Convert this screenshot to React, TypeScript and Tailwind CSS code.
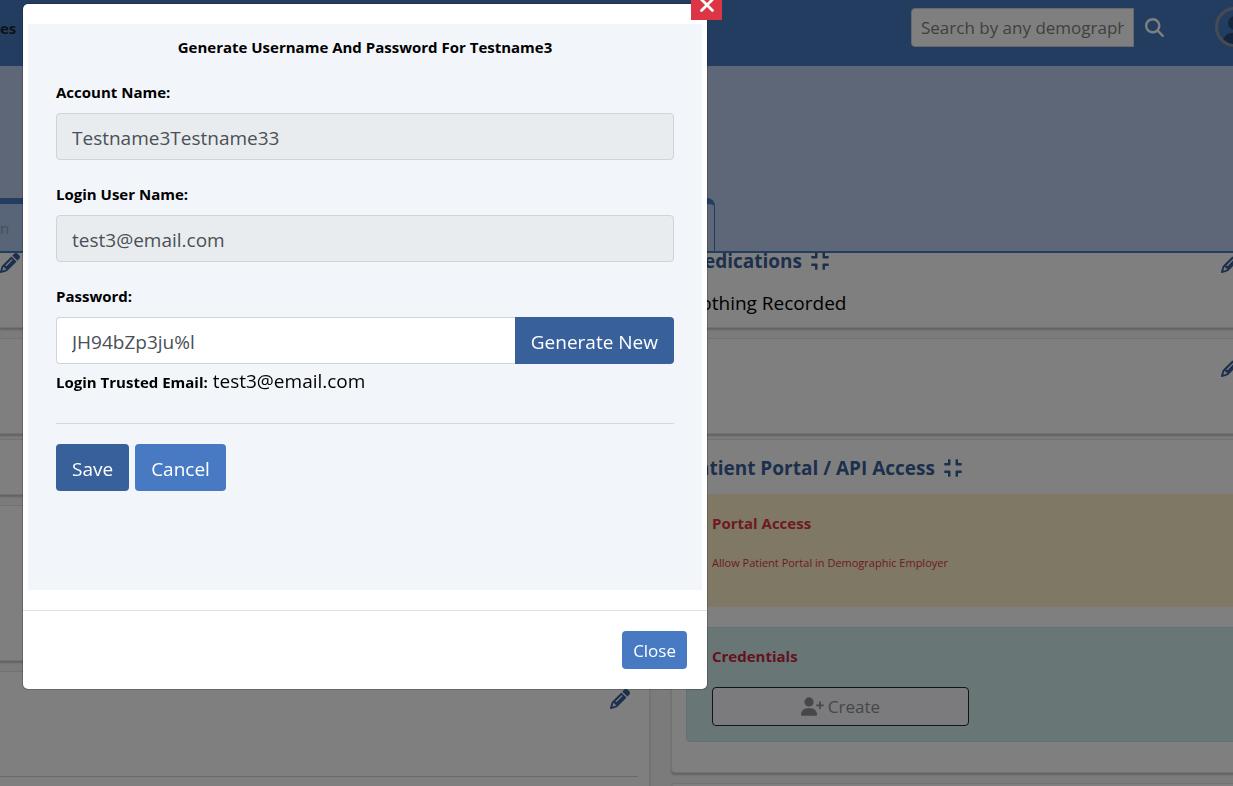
import { useState } from "react";
import type { ReactNode } from "react";
import { FaCompress } from "react-icons/fa";
import { FaMagnifyingGlass, FaPencil, FaUser, FaUserPlus, FaXmark } from "react-icons/fa6";

function Card({ className = "", children }: { className?: string; children?: ReactNode }) {
    return (
        <section className={`rounded-sm border border-[#e4e4e4] bg-white px-[14px] shadow-[0_2px_2px_#c4c4c4] ${className}`}>
            {children}
        </section>
    );
}

function EditLink({ className = "" }: { className?: string }) {
    return (
        <a href="#edit" aria-label="Edit" className={`shrink-0 text-[#38609b] ${className}`}>
            <FaPencil className="size-5" />
        </a>
    );
}

function CardTitle({ children }: { children: ReactNode }) {
    return (
        <h2 className="flex items-center gap-2 text-[19px] leading-6 font-bold text-[#38609b]">
            {children}
            <FaCompress className="size-5" />
        </h2>
    );
}

function Field({ id, label, children }: { id: string; label: string; children: ReactNode }) {
    return (
        <div className="mb-[22px]">
            <label htmlFor={id} className="mb-[9px] block text-[15px] leading-6 font-bold">
                {label}
            </label>
            {children}
        </div>
    );
}

function Dashboard() {
    return (
        <div className="h-full">
            {/* Top bar */}
            <header className="flex h-[66px] items-start justify-between bg-[#477ac3]">
                <nav className="flex pt-4 text-[15px] leading-6 font-bold text-[#212529]">
                    <a href="#fees">es</a>
                </nav>
                <div className="-mr-[22px] flex items-center pt-[7px]">
                    <input
                        type="text"
                        aria-label="Search patients"
                        placeholder="Search by any demographics"
                        className="h-[39px] w-[223px] rounded-l border border-[#ced4da] bg-white px-[9px] text-[17px] placeholder:text-[#7d8287]"
                    />
                    <button type="button" aria-label="Search" className="px-[11px] text-white">
                        <FaMagnifyingGlass className="size-[19px]" />
                    </button>
                    <span className="ml-10 flex size-10 items-end justify-center overflow-hidden rounded-full border-[3px] border-[#8c96a4] text-[#2a4a7c]">
                        <FaUser className="size-7" />
                    </span>
                </div>
            </header>

            {/* Patient banner with the tab strip */}
            <div className="flex h-[187px] items-end border-b-2 border-[#477ac3] bg-[#bbcfee]">
                <nav className="flex h-[53px] w-[58%] rounded-tr-lg border-t-[6px] border-r border-[#477ac3]">
                    <a href="#tab" className="w-10 bg-[#b0c8ee] pt-3 text-[15px] leading-6 text-[#8c9db8]">
                        n
                    </a>
                </nav>
            </div>

            <main className="-mr-[27px] flex gap-[21px] bg-[#f7f7f7]">
                <div className="w-[650px] shrink-0">
                    <Card className="h-[75px] rounded-l-none border-t-0 border-l-0 !px-0">
                        <EditLink className="block" />
                    </Card>
                    <Card className="mt-[10px] h-24 rounded-l-none border-l-0" />
                    <Card className="mt-[5px] h-14 rounded-l-none border-l-0" />
                    <Card className="mt-[10px] h-[156px] rounded-l-none border-l-0" />
                    <Card className="mt-[10px] h-40 rounded-l-none border-l-0 !px-0">
                        <div className="mr-[11px] flex h-[105px] justify-end border-b border-[#d4d4d4] pt-[17px] pr-2">
                            <EditLink />
                        </div>
                    </Card>
                </div>

                <div className="min-w-0 flex-1">
                    <Card className="flex h-[75px] justify-between border-t-0">
                        <div>
                            <div className="-mt-1">
                                <CardTitle>Medications</CardTitle>
                            </div>
                            <p className="mt-4 text-[19px] leading-7">Nothing Recorded</p>
                        </div>
                        <EditLink className="mr-1" />
                    </Card>
                    <Card className="mt-[10px] flex h-24 justify-end pt-[18px]">
                        <EditLink className="mr-1" />
                    </Card>
                    <Card className="mt-[5px] h-[334px] pt-4">
                        <CardTitle>Patient Portal / API Access</CardTitle>
                        <div className="mt-3.5 h-[113px] bg-[#fff0c8] px-[26px] pt-[17px] text-[#dc3545]">
                            <h3 className="text-[15px] leading-6 font-bold">Portal Access</h3>
                            <p className="mt-[18px] text-[11px] leading-5">Allow Patient Portal in Demographic Employer</p>
                        </div>
                        <div className="mt-5 h-[115px] rounded border border-[#bee5eb] bg-[#d1edec] px-[25px] pt-4">
                            <h3 className="text-[15px] leading-6 font-bold text-[#c82340]">Credentials</h3>
                            <button
                                type="button"
                                className="mt-[19px] flex h-[39px] w-[257px] items-center justify-center gap-1 rounded-sm border border-[#1b2a3a] bg-[#f6f6fa] text-[17px] text-[#8a8f94]"
                            >
                                <FaUserPlus className="size-[23px]" />
                                Create
                            </button>
                        </div>
                    </Card>
                    <Card className="mt-[10px] h-20" />
                </div>
            </main>
        </div>
    );
}

const inputClass = "h-[47px] border border-[#ced4da] px-[15px] pt-[3px] text-[19px] text-[#495057]";

function CredentialsDialog() {
    const [password, setPassword] = useState("JH94bZp3ju%l");

    return (
        <div
            role="dialog"
            aria-modal="true"
            aria-labelledby="dialog-title"
            className="relative w-full max-w-[686px] rounded-md border border-black/20 bg-white bg-clip-padding"
        >
            <button
                type="button"
                aria-label="Close dialog"
                className="absolute -top-[15px] -right-[15px] flex size-[31px] items-center justify-center bg-[#dc3545] text-white"
            >
                <FaXmark className="size-[22px]" />
            </button>

            <div className="px-[5px] py-5">
                <form className="min-h-[566px] bg-[#f2f6fb] px-7 pt-[11px]" onSubmit={(e) => e.preventDefault()}>
                    <h1 id="dialog-title" className="mb-[21px] text-center text-[15px] leading-6 font-bold">
                        Generate Username And Password For Testname3
                    </h1>

                    <Field id="account" label="Account Name:">
                        <input id="account" readOnly value="Testname3Testname33" className={`${inputClass} w-full rounded bg-[#e9ecef]`} />
                    </Field>
                    <Field id="login" label="Login User Name:">
                        <input id="login" readOnly value="test3@email.com" className={`${inputClass} w-full rounded bg-[#e9ecef]`} />
                    </Field>

                    <label htmlFor="password" className="mb-[9px] block text-[15px] leading-6 font-bold">
                        Password:
                    </label>
                    <div className="flex">
                        <input
                            id="password"
                            value={password}
                            onChange={(e) => setPassword(e.target.value)}
                            className={`${inputClass} min-w-0 flex-1 rounded-l border-r-0 bg-white`}
                        />
                        <button type="button" className="h-[47px] rounded-r bg-[#38609b] px-4 pt-1 text-[19px] whitespace-nowrap text-white">
                            Generate New
                        </button>
                    </div>
                    <p className="mt-[3px] text-[19px] leading-7">
                        <strong className="text-[15px]">Login Trusted Email:</strong> test3@email.com
                    </p>

                    <hr className="mt-[27px] mb-5 border-[#d4d9de]" />

                    <div className="flex gap-1.5">
                        <button type="submit" className="h-[47px] rounded bg-[#38609b] px-4 pt-1 text-[19px] text-white">
                            Save
                        </button>
                        <button type="button" className="h-[47px] rounded bg-[#477ac3] px-4 pt-1 text-[19px] text-white">
                            Cancel
                        </button>
                    </div>
                </form>
            </div>

            <footer className="flex justify-end border-t border-[#dee2e6] px-5 py-5">
                <button type="button" className="h-[38px] rounded-sm bg-[#477ac3] px-[11px] pt-0.5 text-[17px] text-white">
                    Close
                </button>
            </footer>
        </div>
    );
}

export default function App() {
    return (
        <div className="h-screen overflow-hidden bg-[#f7f7f7] font-['Open_Sans',sans-serif] text-black">
            <Dashboard />
            <div className="fixed inset-0 overflow-hidden bg-black/50 pt-[3px] pl-[22px]">
                <CredentialsDialog />
            </div>
        </div>
    );
}
